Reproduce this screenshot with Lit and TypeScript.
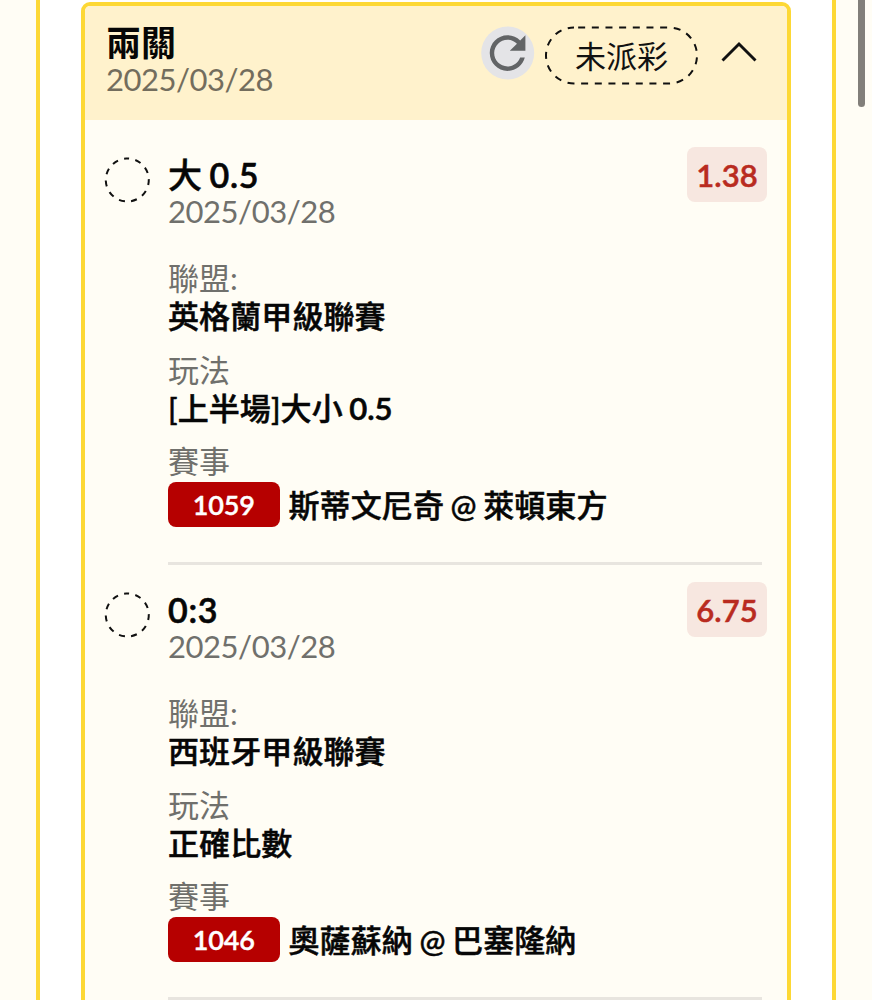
import { LitElement, html, css } from "lit";
import { customElement, property } from "lit/decorators.js";

interface Leg {
  pick: string;
  date: string;
  odds: string;
  league: string;
  play: string;
  code: string;
  match: string;
}

const LEGS: Leg[] = [
  { pick: "大 0.5", date: "2025/03/28", odds: "1.38", league: "英格蘭甲級聯賽", play: "[上半場]大小 0.5", code: "1059", match: "斯蒂文尼奇 @ 萊頓東方" },
  { pick: "0:3", date: "2025/03/28", odds: "6.75", league: "西班牙甲級聯賽", play: "正確比數", code: "1046", match: "奧薩蘇納 @ 巴塞隆納" },
];

// Numerals need a heavier weight than the Han characters beside them.
const mixed = (text: string) =>
  text
    .split(/([0-9.:]+)/)
    .filter((part) => part)
    .map((part) => (/^[0-9.:]+$/.test(part) ? html`<span class="num">${part}</span>` : part));

@customElement("bet-leg")
class BetLeg extends LitElement {
  @property({ attribute: false }) leg!: Leg;

  static styles = css`
    :host { display: flex; box-sizing: border-box; height: 435px; padding: 0 20px 0 20px; }
    .ring { display: block; flex: none; width: 46px; height: 46px; margin: 27px 18px 0 -1px; }
    .body { flex: 1; box-sizing: border-box; height: 435px; padding-top: 25px; margin-right: 5px; border-bottom: 3px solid #e8e5df; }
    .top { display: flex; justify-content: space-between; height: 74px; margin-right: -5px; }
    .pick { font-size: 34px; line-height: 39px; height: 38px; font-weight: 500; word-spacing: -1px; color: #060606; -webkit-text-stroke: 0.5px #060606; }
    .num { font-weight: 600; -webkit-text-stroke-width: 0.6px; letter-spacing: -0.1px; }
    .pick .num { letter-spacing: 0.7px; }
    .date { font-size: 31px; line-height: 37px; letter-spacing: -0.45px; color: #70706c; }
    .odds { width: 80px; height: 55px; margin-top: -8px; border-radius: 8px; background: #f7e7e0; color: #b92b20; font-size: 31px; line-height: 57px; font-weight: 600; -webkit-text-stroke: 0.5px #b92b20; text-align: center; }
    .label { font-size: 31px; line-height: 38px; color: #70706c; }
    .value { font-size: 31px; line-height: 38px; font-weight: 500; letter-spacing: 0.1px; word-spacing: -1.4px; color: #060606; -webkit-text-stroke: 0.5px #060606; white-space: nowrap; }
    .group { height: 76px; margin-bottom: 15.5px; }
    .groups { padding-top: 30px; }
    .row { display: flex; align-items: center; height: 45px; gap: 9px; margin-top: 2px; }
    .row .value { padding-top: 1px; }
    .code { width: 111.5px; height: 45px; border-radius: 8px; background: #b60000; color: #fff; font-size: 27px; line-height: 46px; font-weight: 600; letter-spacing: -0.2px; -webkit-text-stroke: 0.4px #fff; text-align: center; }
  `;

  render() {
    const l = this.leg;
    return html`
      <svg class="ring" viewBox="0 0 46 46"><circle cx="23" cy="23.3" r="21.5" fill="none" stroke="#111" stroke-width="2" stroke-dasharray="6 6.28" stroke-dashoffset="3" transform="rotate(-93 23 23)" /></svg>
      <div class="body">
        <div class="top">
          <div><div class="pick">${mixed(l.pick)}</div><div class="date">${l.date}</div></div>
          <div class="odds">${l.odds}</div>
        </div>
        <div class="groups">
          <div class="group"><div class="label">聯盟:</div><div class="value">${mixed(l.league)}</div></div>
          <div class="group"><div class="label">玩法</div><div class="value">${mixed(l.play)}</div></div>
          <div class="label">賽事</div>
          <div class="row"><div class="code">${l.code}</div><div class="value">${mixed(l.match)}</div></div>
        </div>
      </div>
    `;
  }
}

@customElement("app-root")
class AppRoot extends LitElement {
  static styles = css`
    :host { display: block; height: 1000px; overflow: hidden; background: #fffdf5; font-family: Lato, "Noto Sans CJK TC", sans-serif; }
    .page { display: flex; height: 1000px; }
    .panel { box-sizing: border-box; flex: none; width: 800px; height: 1000px; margin-left: 36px; padding: 2px 41px 0; border: solid #fdd835; border-width: 0 4px; background: #fff; overflow: hidden; }
    .card { box-sizing: border-box; width: 710px; height: 1040px; border: 4px solid #fdd835; border-radius: 9px; background: #fffdf5; overflow: hidden; }
    .head { display: flex; box-sizing: border-box; height: 114px; padding: 0 30px 0 21px; background: #fff2cc; }
    .titles { flex: 1; padding-top: 17px; }
    .title { font-size: 35px; line-height: 38px; font-weight: 700; color: #060606; }
    .date { font-size: 31px; line-height: 37px; letter-spacing: -0.5px; color: #736d5d; }
    .refresh { display: block; flex: none; width: 54px; height: 54px; margin: 20px 10px 0 0; }
    .pill { position: relative; flex: none; width: 153px; height: 59px; margin-top: 20px; }
    .outline { display: block; width: 153px; height: 59px; }
    .status { position: absolute; inset: 0; font-size: 31px; line-height: 61px; text-align: center; color: #111; }
    .chevron { display: block; flex: none; width: 36px; height: 22px; margin: 35px 0 0 23px; }
    .legs { padding-top: 10px; }
    .thumb { width: 7px; height: 107px; margin-left: 22px; border-radius: 0 0 4px 4px; background: #827f7a; }
  `;

  render() {
    return html`
      <div class="page">
        <div class="panel">
          <div class="card">
            <div class="head">
              <div class="titles"><div class="title">兩關</div><div class="date">2025/03/28</div></div>
              <svg class="refresh" viewBox="0 0 54 54">
                <circle cx="26.7" cy="27" r="26.5" fill="#e4e4e7" />
                <path transform="translate(-0.2 0.3) scale(2.23)" fill="#626466" d="M17.65 6.35C16.2 4.9 14.21 4 12 4c-4.42 0-7.99 3.58-7.99 8s3.57 8 7.99 8c3.73 0 6.84-2.55 7.73-6h-2.08c-.82 2.33-3.04 4-5.65 4-3.31 0-6-2.69-6-6s2.69-6 6-6c1.66 0 3.14.69 4.22 1.78L13 11h7V4l-2.35 2.35z" />
              </svg>
              <div class="pill">
                <svg class="outline" viewBox="0 0 153 59"><path d="M29 1.5H124A28 28 0 0 1 124 57.5H29A28 28 0 0 1 29 1.5Z" fill="none" stroke="#111" stroke-width="2" stroke-dasharray="7 6.66" stroke-dashoffset="9.5" /></svg>
                <div class="status">未派彩</div>
              </div>
              <svg class="chevron" viewBox="0 0 36 22"><path d="M1.5 19.5L18 3L34.5 19.5" fill="none" stroke="#111" stroke-width="2.9" /></svg>
            </div>
            <div class="legs">${LEGS.map((l) => html`<bet-leg .leg=${l}></bet-leg>`)}</div>
          </div>
        </div>
        <div class="thumb"></div>
      </div>
    `;
  }
}
